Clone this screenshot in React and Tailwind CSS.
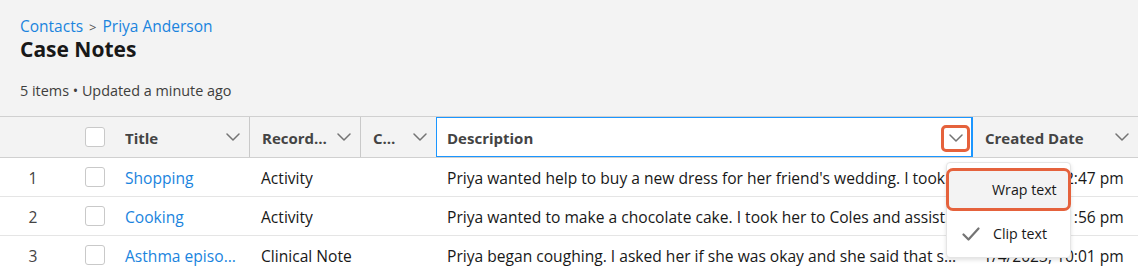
import React from 'react'

const cols = 'grid grid-cols-[75px_38px_137px_111px_75px_537px_1fr]'

const Chevron = ({ className = '' }) => (
  <svg width="14" height="8" viewBox="0 0 14 8" fill="none" className={className}>
    <path d="M1 1l6 6 6-6" stroke="#747474" strokeWidth="1.5" strokeLinecap="round" strokeLinejoin="round" />
  </svg>
)

const Checkbox = () => (
  <div className="w-5 h-5 bg-white border border-[#c9c9c9] rounded-[3px]" />
)

const rows = [
  {
    n: 1,
    title: 'Shopping',
    type: 'Activity',
    desc: "Priya wanted help to buy a new dress for her friend's wedding. I took her to Westfield and we found a blue dress.",
    date: '2/04/2023, 2:47 pm',
  },
  {
    n: 2,
    title: 'Cooking',
    type: 'Activity',
    desc: 'Priya wanted to make a chocolate cake. I took her to Coles and assisted her with buying the ingredients.',
    date: '2/04/2023, 1:56 pm',
  },
  {
    n: 3,
    title: 'Asthma episode',
    type: 'Clinical Note',
    desc: 'Priya began coughing. I asked her if she was okay and she said that she was having trouble breathing.',
    date: '1/4/2023, 10:01 pm',
  },
]

const HeaderCell = ({ label, border = true }) => (
  <div className={`flex items-center justify-between pl-3 pr-[9px] ${border ? 'border-r border-[#c9c9c9]' : ''}`}>
    <span className="font-bold text-[#444] truncate pt-[2px]">{label}</span>
    <Chevron className="shrink-0" />
  </div>
)

export default function App() {
  return (
    <div className="w-[1138px] h-[274px] overflow-hidden bg-white text-[15.6px] text-[#181818] font-['Open_Sans',sans-serif] relative">
      {/* page header */}
      <div className="bg-[#f3f3f3] h-[116px] pl-5 pt-[15px]">
        <div className="text-[15.5px] leading-[22px]">
          <span className="text-[#1a84de]">Contacts</span>
          <span className="text-[#555] text-[13px] mx-[6px]">&gt;</span>
          <span className="text-[#1a84de]">Priya Anderson</span>
        </div>
        <h1 className="text-[21px] leading-[22px] font-bold text-[#181818]">Case Notes</h1>
        <div className="mt-[21px] text-[14.4px] leading-[20px] text-[#3e3e3c]">5 items • Updated a minute ago</div>
      </div>

      {/* table header */}
      <div className={`${cols} h-[42px] bg-[#f3f3f3] border-y border-[#d0d0d0] text-[15px]`}>
        <div />
        <div className="flex items-center pl-[10px]">
          <Checkbox />
        </div>
        <HeaderCell label="Title" />
        <HeaderCell label="Record…" />
        <HeaderCell label="C…" border={false} />
        <div className="flex items-center justify-between bg-white border border-[#1b96ff] border-r-2 pl-[10px] pr-[1px]">
          <span className="font-bold text-[#444] pt-[2px]">Description</span>
          <div className="w-[29px] h-[27px] mt-[2px] rounded-[5px] border-[3px] border-[#e5623c] bg-white flex items-center justify-center">
            <Chevron />
          </div>
        </div>
        <HeaderCell label="Created Date" border={false} />
      </div>

      {/* rows */}
      {rows.map((r) => (
        <div key={r.n} className={`${cols} h-[39px] border-b border-[#e5e5e5] items-center`}>
          <div className="text-center pr-[9px] pt-[4px] text-[#444]">{r.n}</div>
          <div className="flex items-center pl-[10px]">
            <Checkbox />
          </div>
          <div className="pl-3 pr-3 pt-[4px] truncate text-[#1a84de]">{r.title}</div>
          <div className="pl-[11px] pr-2 pt-[4px] truncate">{r.type}</div>
          <div />
          <div className="pl-[11px] pr-3 pt-[4px] truncate">{r.desc}</div>
          <div className="pl-[10px] pt-[4px] truncate">{r.date}</div>
        </div>
      ))}

      {/* column menu */}
      <div className="absolute left-[946px] top-[162px] w-[125px] h-[96px] bg-white border border-[#e5e5e5] rounded-[4px] shadow-[0_2px_4px_rgba(0,0,0,0.12)] text-[14.2px]">
        <div className="-mx-px mt-[5px] h-[43px] rounded-[7px] border-[3px] border-[#e5623c] bg-[#f3f3f3] flex items-center pl-[43px] text-[#181818]">
          Wrap text
        </div>
        <div className="h-[45px] flex items-center pl-[15px]">
          <svg width="18" height="14" viewBox="0 0 18 14" fill="none" className="mr-[13px]">
            <path d="M1.5 7.5l5 5 10-11" stroke="#747474" strokeWidth="2.2" strokeLinecap="round" strokeLinejoin="round" />
          </svg>
          <span>Clip text</span>
        </div>
      </div>
    </div>
  )
}
